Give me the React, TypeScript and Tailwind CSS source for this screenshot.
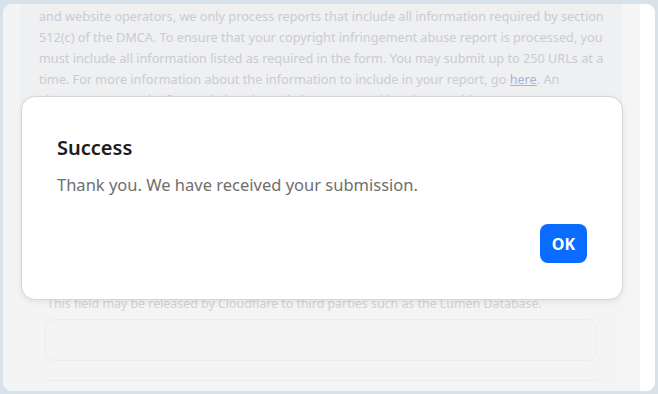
import React from "react";

const font = { fontFamily: '"Noto Sans", "Open Sans", sans-serif' };

const introLines = [
  "and website operators, we only process reports that include all information required by section",
  "512(c) of the DMCA. To ensure that your copyright infringement abuse report is processed, you",
  "must include all information listed as required in the form. You may submit up to 250 URLs at a",
];

const Page = () => {
  return (
    <div className="flex h-[387px] overflow-hidden rounded-[9px] bg-white">
      <div className="w-[17px] shrink-0 bg-[#f3f4f5]" />
      <div className="flex w-[602px] shrink-0 flex-col">
        <div className="h-[200px] bg-[#eff0f2] pl-[19px] pt-[2px] text-[12.7px] leading-[21px] whitespace-nowrap text-[#c9ccd1]">
          {introLines.map((line) => (
            <p key={line}>{line}</p>
          ))}
          <p>
            time. For more information about the information to include in your
            report, go <span className="text-[#aab3d9] underline">here</span>. An
          </p>
          <p>abuse report may be forwarded to the website owner and hosting provider.</p>
        </div>
        <div className="flex flex-1 flex-col bg-[#f4f4f4] px-[25px] pt-[90px]">
          <p className="pl-[2px] text-[12.4px] leading-[20px] text-[#d2d2d2]">
            This field may be released by Cloudflare to third parties such as
            the Lumen Database.
          </p>
          <div className="mt-[5px] h-[42px] rounded-[10px] border border-[#ececec]" />
          <div className="mt-[19px] h-px bg-[#ececec]" />
        </div>
      </div>
      <div className="w-[18px] shrink-0 bg-[#f5f5f5]" />
      <div className="flex-1 bg-white" />
    </div>
  );
};

const SuccessModal = () => {
  return (
    <div className="absolute left-[21px] top-[96px] flex h-[204px] w-[602px] flex-col rounded-[14px] border border-[#d6d6d6] bg-white px-[35px] pt-[37px] shadow-[0_2px_6px_rgba(0,0,0,0.08)]">
      <h2 className="text-[20px] font-semibold leading-[28px] text-[#1b1b1b]">
        Success
      </h2>
      <p className="mt-[11px] text-[16.5px] leading-[24px] text-[#6e6e6e]">
        Thank you. We have received your submission.
      </p>
      <div className="mt-[27px] flex justify-end">
        <button className="h-[39px] w-[47px] rounded-[8px] bg-[#0a6cff] text-[16px] font-bold text-white">
          OK
        </button>
      </div>
    </div>
  );
};

export default function App() {
  return (
    <div
      className="relative h-[394px] w-[658px] bg-[#d8e2ea] pl-[3px] pr-[3px] pt-[4px]"
      style={font}
    >
      <Page />
      <SuccessModal />
    </div>
  );
}
